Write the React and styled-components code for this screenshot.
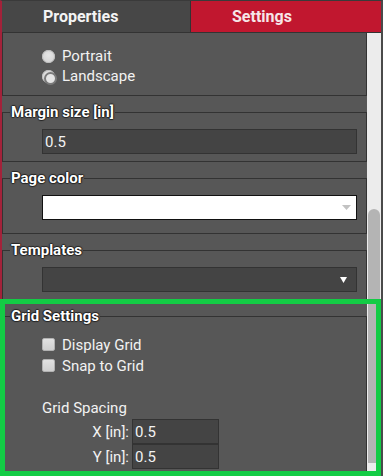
import React from "react";
import styled, { createGlobalStyle } from "styled-components";

const GlobalStyle = createGlobalStyle`
  html, body { margin: 0; padding: 0; background: #ffffff; }
  body { font-family: Roboto, "Liberation Sans", sans-serif; }
  * { box-sizing: border-box; }
`;

const Stage = styled.div`
  position: relative;
  width: 383px;
  height: 476px;
  overflow: hidden;
`;

const Frame = styled.div`
  width: 383px;
  height: 476px;
  display: flex;
  flex-direction: column;
  border-top: 1px solid #3a3a3a;
  border-left: 2px solid #a3223a;
  border-right: 2px solid #4a4a4a;
  background: #575757;
`;

const TabBar = styled.div`
  display: flex;
  flex-shrink: 0;
  height: 32px;
  border-bottom: 1px solid #333333;
`;

const Tab = styled.div`
  width: ${(p) => p.$w}px;
  height: 31px;
  padding-left: 41px;
  background: ${(p) => (p.$active ? "#c1172f" : "#474747")};
  border-right: ${(p) => (p.$sep ? "1px solid #333333" : "none")};
  color: ${(p) => (p.$active ? "#f6e6e8" : "#f4f4f4")};
  font: 700 16px/31px Roboto, "Liberation Sans", sans-serif;
`;

const Body = styled.div`
  flex: 1;
  min-height: 0;
  display: flex;
`;

const Viewport = styled.div`
  flex: 1;
  overflow: hidden;
  background: #575757;
`;

const Scroller = styled.div`
  margin-top: -10px;
`;

const Track = styled.div`
  width: 14px;
  background: #ececec;
  padding: 176px 1px 0 1px;
`;

const Thumb = styled.div`
  height: 254px;
  background: #b4b4b4;
  border-radius: 6px 6px 0 0;
`;

const Group = styled.fieldset`
  margin: 0 0 7px 0;
  padding: 0;
  border: 1px solid #333333;
  min-inline-size: auto;
`;

const Legend = styled.legend`
  margin-left: 7px;
  padding: 0 1px;
  font: 700 15px/18px Roboto, "Liberation Sans", sans-serif;
  color: #ffffff;
  text-shadow: 1px 0 1px rgba(0, 0, 0, 0.55), -1px 0 1px rgba(0, 0, 0, 0.55),
    0 1px 1px rgba(0, 0, 0, 0.55), 0 -1px 1px rgba(0, 0, 0, 0.55);
`;

const GroupBody = styled.div`
  padding: ${(p) => p.$pt ?? 8}px 9px ${(p) => p.$pb ?? 7}px 39px;
`;

const OptionRow = styled.label`
  display: flex;
  align-items: center;
  gap: 7px;
  height: ${(p) => p.$h}px;
  color: #f2f2f2;
  font: 400 15px/18px Roboto, "Liberation Sans", sans-serif;
`;

const Radio = styled.span`
  position: relative;
  width: 13px;
  height: 13px;
  flex-shrink: 0;
  border-radius: 50%;
  background: radial-gradient(circle at 50% 40%, #e6e6e6, #cfcfcf);
  box-shadow: inset 0 0 0 1px #bdbdbd;
  &::after {
    content: "";
    display: ${(p) => (p.$checked ? "block" : "none")};
    position: absolute;
    left: 2px;
    top: 2px;
    width: 9px;
    height: 9px;
    border-radius: 50%;
    border: 2px solid #7a7a7a;
    background: #e4e4e4;
  }
`;

const Check = styled.span`
  width: 13px;
  height: 13px;
  flex-shrink: 0;
  border-radius: 2px;
  background: linear-gradient(#e2e2e2, #d0d0d0);
  border: 1px solid #b2b2b2;
`;

const TextInput = styled.input`
  display: block;
  width: ${(p) => p.$w ?? 315}px;
  height: 25px;
  margin: 0;
  padding: 0 2px;
  background: #444444;
  border: 1px solid #333333;
  color: #f2f2f2;
  font: 400 15px/23px Roboto, "Liberation Sans", sans-serif;
  outline: none;
`;

const SelectBox = styled.div`
  display: flex;
  align-items: center;
  justify-content: flex-end;
  width: 315px;
  height: 25px;
  padding-right: ${(p) => p.$pr}px;
  background: ${(p) => (p.$light ? "#ffffff" : "#444444")};
  border: 1px solid ${(p) => (p.$light ? "#111111" : "#333333")};
`;

const SubTitle = styled.div`
  margin-top: 23px;
  height: 18px;
  color: #f2f2f2;
  font: 400 15px/18px Roboto, "Liberation Sans", sans-serif;
`;

const SpacingRow = styled.div`
  display: flex;
  align-items: center;
  margin-top: ${(p) => p.$mt}px;
`;

const SpacingLabel = styled.span`
  width: 90px;
  padding-right: 3px;
  text-align: right;
  color: #f2f2f2;
  font: 400 15px/18px Roboto, "Liberation Sans", sans-serif;
`;

const Highlight = styled.div`
  position: absolute;
  left: 0;
  top: 299px;
  width: 381px;
  height: 177px;
  border: 5px solid #13cc45;
  pointer-events: none;
`;

const Caret = ({ color, w, h }) => (
  <svg width={w} height={h} viewBox={`0 0 ${w} ${h}`}>
    <polygon points={`0,0 ${w},0 ${w / 2},${h}`} fill={color} />
  </svg>
);

export default function App() {
  return (
    <>
      <GlobalStyle />
      <Stage>
        <Frame>
          <TabBar>
            <Tab $w={189} $sep>Properties</Tab>
            <Tab $w={190} $active>Settings</Tab>
          </TabBar>
          <Body>
            <Viewport>
              <Scroller>
                <Group>
                  <GroupBody $pt={22} $pb={9}>
                    <OptionRow $h={20}>
                      <Radio />
                      Portrait
                    </OptionRow>
                    <OptionRow $h={20}>
                      <Radio $checked />
                      Landscape
                    </OptionRow>
                  </GroupBody>
                </Group>

                <Group>
                  <Legend>Margin size [in]</Legend>
                  <GroupBody>
                    <TextInput defaultValue="0.5" />
                  </GroupBody>
                </Group>

                <Group>
                  <Legend>Page color</Legend>
                  <GroupBody $pb={13}>
                    <SelectBox $light $pr={5}>
                      <Caret color="#c2c2c2" w={9} h={5} />
                    </SelectBox>
                  </GroupBody>
                </Group>

                <Group>
                  <Legend>Templates</Legend>
                  <GroupBody>
                    <SelectBox $pr={9}>
                      <Caret color="#ffffff" w={7} h={6} />
                    </SelectBox>
                  </GroupBody>
                </Group>

                <Group>
                  <Legend>Grid Settings</Legend>
                  <GroupBody $pt={9} $pb={8}>
                    <OptionRow $h={21}>
                      <Check />
                      Display Grid
                    </OptionRow>
                    <OptionRow $h={21}>
                      <Check />
                      Snap to Grid
                    </OptionRow>
                    <SubTitle>Grid Spacing</SubTitle>
                    <SpacingRow $mt={2}>
                      <SpacingLabel>X [in]:</SpacingLabel>
                      <TextInput $w={87} defaultValue="0.5" />
                    </SpacingRow>
                    <SpacingRow $mt={0}>
                      <SpacingLabel>Y [in]:</SpacingLabel>
                      <TextInput $w={87} defaultValue="0.5" />
                    </SpacingRow>
                  </GroupBody>
                </Group>
              </Scroller>
            </Viewport>
            <Track>
              <Thumb />
            </Track>
          </Body>
        </Frame>
        <Highlight />
      </Stage>
    </>
  );
}
